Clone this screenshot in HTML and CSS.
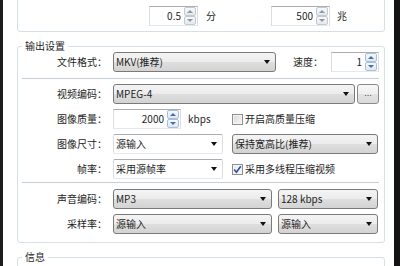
FILE: index.html
```html
<!DOCTYPE html>
<html>
<head>
<meta charset="utf-8">
<link rel="stylesheet" href="styles.css">
</head>
<body>
<div class="frame">
  <div class="edge-l"></div>
  <main class="content">
    <div class="panel top-panel">
      <div class="spin w49"><span class="val">0.5</span><span class="spinbtns"><i class="sb"><b class="up"></b></i><i class="sb"><b class="dn"></b></i></span></div>
      <span class="unit u1">分</span>
      <div class="spin w59 ml55"><span class="val">500</span><span class="spinbtns"><i class="sb"><b class="up"></b></i><i class="sb"><b class="dn"></b></i></span></div>
      <span class="unit u2">兆</span>
    </div>

    <fieldset class="group out">
      <legend>输出设置</legend>
      <div class="row">
        <span class="lbl">文件格式：</span>
        <div class="combo w163"><span class="txt">MKV(推荐)</span><b class="arrow"></b></div>
        <span class="lbl2">速度：</span>
        <div class="spin w48"><span class="val">1</span><span class="spinbtns blue"><i class="sb"><b class="up"></b></i><i class="sb"><b class="dn"></b></i></span></div>
      </div>
      <div class="sep s1"></div>
      <div class="rows">
        <div class="row">
          <span class="lbl">视频编码：</span>
          <div class="combo w242"><span class="txt">MPEG-4</span><b class="arrow"></b></div>
          <div class="btn">...</div>
        </div>
        <div class="row">
          <span class="lbl">图像质量：</span>
          <div class="spin w68"><span class="val">2000</span><span class="spinbtns blue"><i class="sb"><b class="up"></b></i><i class="sb"><b class="dn"></b></i></span></div>
          <span class="kbps">kbps</span>
          <span class="chk"></span><span class="chk-lbl">开启高质量压缩</span>
        </div>
        <div class="row">
          <span class="lbl">图像尺寸：</span>
          <div class="combo edit w110"><span class="txt">源输入</span><b class="arrow"></b></div>
          <div class="combo w146 ml9"><span class="txt">保持宽高比(推荐)</span><b class="arrow"></b></div>
        </div>
        <div class="row">
          <span class="lbl">帧率：</span>
          <div class="combo edit w110"><span class="txt">采用源帧率</span><b class="arrow"></b></div>
          <span class="chk on ml9"><svg width="9" height="9" viewBox="0 0 9 9"><path d="M1.2 4.6 L3.4 7.2 L7.8 1.2" fill="none" stroke="#2d4f95" stroke-width="1.6"/></svg></span><span class="chk-lbl">采用多线程压缩视频</span>
        </div>
      </div>
      <div class="sep s2"></div>
      <div class="rows">
        <div class="row">
          <span class="lbl">声音编码：</span>
          <div class="combo w159"><span class="txt">MP3</span><b class="arrow"></b></div>
          <div class="combo w100 ml6"><span class="txt">128 kbps</span><b class="arrow"></b></div>
        </div>
        <div class="row">
          <span class="lbl">采样率：</span>
          <div class="combo w159"><span class="txt">源输入</span><b class="arrow"></b></div>
          <div class="combo w100 ml6"><span class="txt">源输入</span><b class="arrow"></b></div>
        </div>
      </div>
    </fieldset>

    <fieldset class="group info">
      <legend>信息</legend>
    </fieldset>
  </main>
  <div class="edge-r"></div>
</div>
</body>
</html>
```
FILE: styles.css
```css
* { box-sizing: border-box; }
html, body { margin: 0; padding: 0; }
body {
  background: #ffffff;
  font-family: "Noto Sans CJK SC", "Noto Sans", sans-serif;
  font-size: 10px;
  color: #1e1e1e;
  overflow: hidden;
}
.frame { display: flex; height: 266px; overflow: hidden; }
.edge-l { width: 3px; flex: none; background: #1c1c1c; }
.edge-r { width: 6px; flex: none; background: #141414; }
.content { flex: 1; padding: 0 9px 0 14px; min-width: 0; }

.panel {
  border: 1px solid #d5dfe5;
  border-radius: 3px;
}
.top-panel {
  margin-top: -10px;
  height: 42px;
  padding: 15px 0 5px 131px;
  display: flex;
  align-items: center;
}
.unit { line-height: 12px; }
.u1 { margin-left: 8px; }
.u2 { margin-left: 7px; }
.ml55 { margin-left: 55px; }
.ml9 { margin-left: 9px; }
.ml6 { margin-left: 6px; }

.group {
  margin: 8px 0 0;
  padding: 0 5px 8px 4px;
  border: 1px solid #d5dfe5;
  border-radius: 3px;
  min-width: 0;
}
.group legend {
  padding: 0 3px;
  margin: 0;
  line-height: 12px;
  font-size: 10px;
}
.info { height: 40px; }

.rows { display: flex; flex-direction: column; gap: 5px; }
.row { display: flex; align-items: center; height: 20px; }
.lbl {
  width: 85px;
  flex: none;
  text-align: right;
  margin-right: 6px;
  line-height: 12px;
}
.lbl2 { margin-left: 17px; width: 30px; flex: none; margin-right: 8px; line-height: 12px; }

.sep { height: 1px; background: #c9cfd6; }
.s1 { margin: 6px 0 5px; }
.s2 { margin: 3px 0 6px; }

.combo {
  height: 20px;
  flex: none;
  display: flex;
  align-items: center;
  justify-content: space-between;
  border: 1px solid #7a7a7a;
  border-radius: 3px;
  background: linear-gradient(#f4f4f4 0%, #ececec 48%, #dedede 52%, #d3d3d3 100%);
  padding: 0 5px 0 2px;
}
.combo.edit {
  border-color: #abadb3 #dadce2 #e3e9ef #dadce2;
  border-radius: 2px;
  background: #ffffff;
}
.combo .txt { line-height: 12px; white-space: nowrap; }
.arrow {
  width: 0; height: 0;
  border-left: 3px solid transparent;
  border-right: 3px solid transparent;
  border-top: 4px solid #111;
}
.w163 { width: 163px; }
.w242 { width: 242px; }
.w110 { width: 110px; }
.w146 { width: 146px; }
.w159 { width: 159px; }
.w100 { width: 100px; }

.btn {
  width: 22px; height: 20px; flex: none;
  margin-left: 2px;
  border: 1px solid #8a8a8a;
  border-radius: 3px;
  background: linear-gradient(#f7f7f7 0%, #efefef 48%, #e2e2e2 52%, #dadada 100%);
  display: flex; align-items: center; justify-content: center;
  font-family: "Liberation Sans", sans-serif;
  font-size: 9px;
  color: #444;
  line-height: 10px;
  padding-bottom: 2px;
}

.spin {
  height: 20px;
  flex: none;
  display: flex;
  align-items: center;
  justify-content: flex-end;
  border: 1px solid;
  border-color: #abadb3 #dadce2 #e3e9ef #dadce2;
  background: #ffffff;
  padding: 0 1px 0 2px;
}
.spin .val { line-height: 12px; margin-right: 3px; }
.w49 { width: 49px; }
.w59 { width: 59px; }
.w48 { width: 48px; }
.w68 { width: 68px; }
.spinbtns {
  width: 12px;
  height: 18px;
  display: flex;
  flex-direction: column;
  justify-content: space-between;
  padding: 0;
}
.sb {
  height: 9px;
  border: 1px solid #c3c9d1;
  border-radius: 2px;
  background: linear-gradient(#f8f8f8, #e6e8eb);
  display: flex; align-items: center; justify-content: center;
}
.up, .dn { width: 0; height: 0; border-left: 3px solid transparent; border-right: 3px solid transparent; }
.up { border-bottom: 3px solid #8f99a6; }
.dn { border-top: 3px solid #8f99a6; }
.blue .sb { border-color: #a9bfd6; background: linear-gradient(#f3f8fd, #dce8f4); }
.blue .up { border-bottom-color: #4c6e9e; }
.blue .dn { border-top-color: #4c6e9e; }

.kbps { margin-left: 7px; width: 44px; flex: none; line-height: 12px; }
.chk {
  width: 11px; height: 11px; flex: none;
  border: 1px solid #8e8f8f;
  background: linear-gradient(135deg, #d8d8d8, #f8f8f8);
  box-shadow: inset 0 0 0 1px #f4f4f4;
  display: flex; align-items: center; justify-content: center;
}
.chk.on { background: linear-gradient(135deg, #e6ecf3, #fbfcfd); }
.chk svg { display: block; }
.chk-lbl { margin-left: 2px; line-height: 12px; }
```
